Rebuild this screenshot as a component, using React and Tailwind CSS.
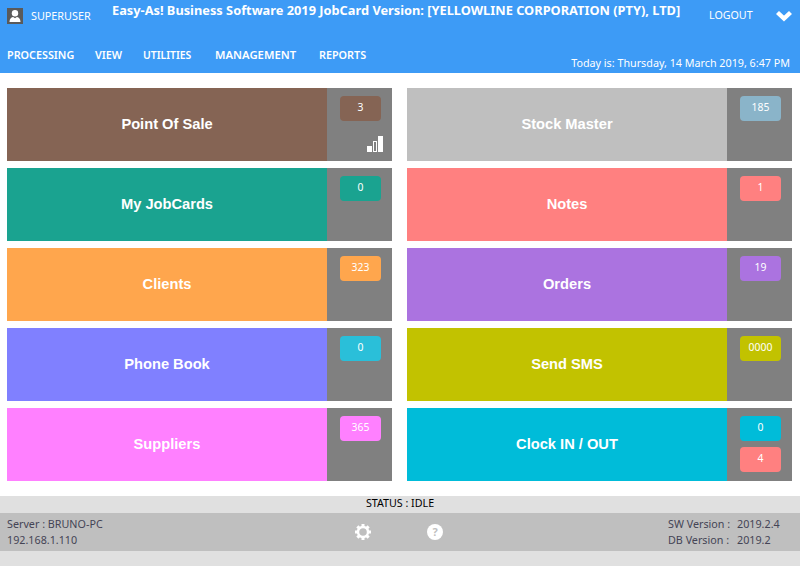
const sans = { fontFamily: '"Noto Sans", "Open Sans", sans-serif' };

function Tile({ label, color, badges, signal }) {
  return (
    <div className="flex h-[73px] w-[385px]">
      <div
        className="flex w-[320px] items-center justify-center pb-[2px] text-[14.67px] font-bold text-white"
        style={{ backgroundColor: color, fontFamily: '"Liberation Sans", Arial, sans-serif' }}
      >
        {label}
      </div>
      <div className="relative flex w-[65px] flex-col items-start gap-[6px] bg-[#808080] pl-[13px] pt-[8px]">
        {badges.map((b, i) => (
          <div
            key={i}
            className="flex h-[25px] w-[41px] items-center justify-center rounded-[4px] pb-[1px] text-[10.4px] text-white"
            style={{ backgroundColor: b.color }}
          >
            {b.text}
          </div>
        ))}
        {signal && (
          <svg className="absolute left-[40px] top-[48px]" width="16" height="16" viewBox="0 0 16 16">
            <rect x="0" y="10" width="5" height="6" fill="#fff" />
            <rect x="6.5" y="5.5" width="3" height="10" fill="none" stroke="#fff" />
            <rect x="11" y="0" width="5" height="16" fill="#fff" />
          </svg>
        )}
      </div>
    </div>
  );
}

const left = [
  { label: "Point Of Sale", color: "#856454", badges: [{ text: "3", color: "#856454" }], signal: true },
  { label: "My JobCards", color: "#1aa390", badges: [{ text: "0", color: "#1aa390" }] },
  { label: "Clients", color: "#ffa64d", badges: [{ text: "323", color: "#ffa64d" }] },
  { label: "Phone Book", color: "#8080ff", badges: [{ text: "0", color: "#2abfd9" }] },
  { label: "Suppliers", color: "#ff80ff", badges: [{ text: "365", color: "#ff80ff" }] },
];
const right = [
  { label: "Stock Master", color: "#bfbfbf", badges: [{ text: "185", color: "#8ab4c9" }] },
  { label: "Notes", color: "#ff8080", badges: [{ text: "1", color: "#ff8080" }] },
  { label: "Orders", color: "#ab73e0", badges: [{ text: "19", color: "#ab73e0" }] },
  { label: "Send SMS", color: "#c2c200", badges: [{ text: "0000", color: "#c2c200" }] },
  { label: "Clock IN / OUT", color: "#00bcd9", badges: [{ text: "0", color: "#00bcd9" }, { text: "4", color: "#ff8080" }] },
];

const teeth = [0, 45, 90, 135];

export default function App() {
  return (
    <div className="flex h-[566px] w-[800px] flex-col overflow-hidden bg-white" style={sans}>
      <header className="flex h-[73px] flex-col bg-[#3d9bf6] text-white">
        <div className="flex h-[47px]">
          <div className="ml-[7px] mt-[8px] flex h-[16px] w-[16px] items-center justify-center bg-[#5a5a5a]">
            <svg width="14" height="14" viewBox="0 0 14 14" fill="#fff">
              <circle cx="7" cy="4.2" r="3.2" />
              <path d="M1.5 13C1.5 9.6 3.6 8 5.2 8L7 9.2 8.8 8C10.4 8 12.5 9.6 12.5 13Z" />
            </svg>
          </div>
          <div className="ml-[8px] mt-[7px] h-[18px] w-[74px] text-[10.8px] leading-[18px]">SUPERUSER</div>
          <div className="ml-[7px] mt-[1px] h-[18px] w-[597px] whitespace-nowrap text-[12.8px] font-bold leading-[18px]">
            Easy-As! Business Software 2019 JobCard Version: [YELLOWLINE CORPORATION (PTY), LTD]
          </div>
          <div className="mt-[6px] h-[18px] w-[66px] text-[10.7px] leading-[18px]">LOGOUT</div>
          <svg className="mt-[10px]" width="18" height="12" viewBox="0 0 18 12">
            <path d="M2.5 2.5L9 8.5l6.5-6" fill="none" stroke="#fff" strokeWidth="4.4" />
          </svg>
        </div>
        <div className="flex items-start justify-between">
          <nav className="ml-[7px] flex text-[10.8px] font-semibold leading-[16px]">
            <span className="w-[88px]">PROCESSING</span>
            <span className="w-[48px]">VIEW</span>
            <span className="w-[72px] text-[10.4px]">UTILITIES</span>
            <span className="w-[104px] text-[11.3px]">MANAGEMENT</span>
            <span>REPORTS</span>
          </nav>
          <div className="mr-[10px] mt-[8px] whitespace-nowrap text-[10.75px] leading-[16px]">
            Today is: Thursday, 14 March 2019, 6:47 PM
          </div>
        </div>
      </header>

      <main className="mt-[15px] flex gap-[15px] pl-[7px]">
        {[left, right].map((col, i) => (
          <div key={i} className="flex flex-col gap-[7px]">
            {col.map((t) => (
              <Tile key={t.label} {...t} />
            ))}
          </div>
        ))}
      </main>

      <div className="mt-[15px] h-[17px] bg-[#e0e0e0] text-center text-[10.7px] leading-[14px] text-black">
        STATUS : IDLE
      </div>
      <footer className="flex h-[38px] items-center bg-[#bfbfbf] px-[7px] text-[10.75px] leading-[16px] text-[#444455]">
        <div className="w-[347px]">
          <div>Server : BRUNO-PC</div>
          <div>192.168.1.110</div>
        </div>
        <svg width="18" height="18" viewBox="0 0 18 18">
          <g stroke="#fff" strokeWidth="3">
            {teeth.map((a) => (
              <path key={a} d="M9 1v16" transform={`rotate(${a} 9 9)`} />
            ))}
          </g>
          <circle cx="9" cy="9" r="5" fill="#bfbfbf" stroke="#fff" strokeWidth="2.4" />
        </svg>
        <div className="ml-[55px] flex h-[16px] w-[16px] items-center justify-center rounded-full bg-white text-[11px] font-bold text-[#bfbfbf]">
          ?
        </div>
        <div className="ml-auto w-[125px]">
          <div className="flex"><span className="w-[69px]">SW Version :</span><span>2019.2.4</span></div>
          <div className="flex"><span className="w-[69px]">DB Version :</span><span>2019.2</span></div>
        </div>
      </footer>
      <div className="flex-1 bg-[#e0e0e0]" />
    </div>
  );
}
